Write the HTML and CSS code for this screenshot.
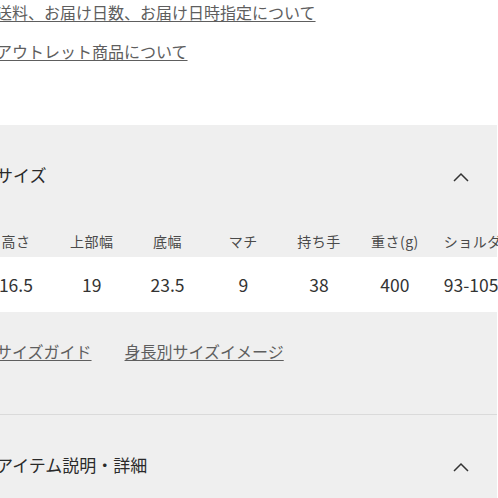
FILE: index.html
```html
<!DOCTYPE html>
<html lang="ja">
<head>
<meta charset="utf-8">
<link rel="stylesheet" href="styles.css">
</head>
<body>
<div class="page">
  <ul class="info-links">
    <li><a href="#">送料、お届け日数、お届け日時指定について</a></li>
    <li><a href="#">アウトレット商品について</a></li>
  </ul>

  <section class="accordion">
    <div class="acc-head">
      <h2 class="acc-title">サイズ</h2>
      <svg class="chevron" width="16" height="10" viewBox="0 0 16 10"><path d="M1 9 L8 2 L15 9" fill="none" stroke="#333" stroke-width="1.5"/></svg>
    </div>
    <div class="size-table">
      <div class="row head">
        <span>高さ</span><span>上部幅</span><span>底幅</span><span>マチ</span><span>持ち手</span><span>重さ(g)</span><span>ショルダー</span>
      </div>
      <div class="row data">
        <span>16.5</span><span>19</span><span>23.5</span><span>9</span><span>38</span><span>400</span><span>93-105</span>
      </div>
    </div>
    <div class="size-links">
      <a href="#">サイズガイド</a>
      <a href="#">身長別サイズイメージ</a>
    </div>
  </section>

  <section class="accordion bordered">
    <div class="acc-head">
      <h2 class="acc-title">アイテム説明・詳細</h2>
      <svg class="chevron" width="16" height="10" viewBox="0 0 16 10"><path d="M1 9 L8 2 L15 9" fill="none" stroke="#333" stroke-width="1.5"/></svg>
    </div>
  </section>
</div>
</body>
</html>
```

FILE: styles.css
```css
html, body {
  margin: 0;
  padding: 0;
  background: #fff;
  overflow: hidden;
}
body {
  font-family: "Noto Sans CJK JP", "Noto Sans", sans-serif;
  color: #333;
}
.page {
  margin-left: -4px;
  width: 501px;
}
.info-links {
  list-style: none;
  margin: 0;
  padding: 0 0 62px 0;
  display: flex;
  flex-direction: column;
  gap: 15px;
}
.info-links li {
  height: 24px;
}
.info-links a {
  font-size: 16px;
  line-height: 24px;
  color: #5e5e5e;
  text-decoration: underline;
  text-underline-offset: 2px;
}
.accordion {
  background: #efefef;
}
.accordion.bordered {
  border-top: 1px solid #dadada;
}
.acc-head {
  height: 100px;
  display: flex;
  align-items: center;
  justify-content: space-between;
  padding-right: 28px;
}
.acc-title {
  margin: 0;
  font-size: 17px;
  font-weight: normal;
  color: #2a2a2a;
  line-height: 24px;
}
.chevron {
  margin-top: 3px;
}
.size-table {
  margin-left: -18px;
  width: 560px;
}
.row {
  display: grid;
  grid-template-columns: repeat(7, 75.8px);
  align-items: center;
  text-align: center;
  white-space: nowrap;
}
.row.head {
  height: 32px;
  font-size: 14px;
  color: #4a4a4a;
  letter-spacing: 0.5px;
}
.row.data {
  height: 55px;
  background: #fff;
  font-size: 17.5px;
  color: #333;
}
.row span:last-child {
  text-align: left;
  padding-left: 11px;
}
.size-links {
  display: flex;
  gap: 33px;
  padding: 27px 0 51px 0;
}
.size-links a {
  font-size: 16px;
  line-height: 24px;
  color: #5e5e5e;
  text-decoration: underline;
  text-underline-offset: 2px;
}
```
